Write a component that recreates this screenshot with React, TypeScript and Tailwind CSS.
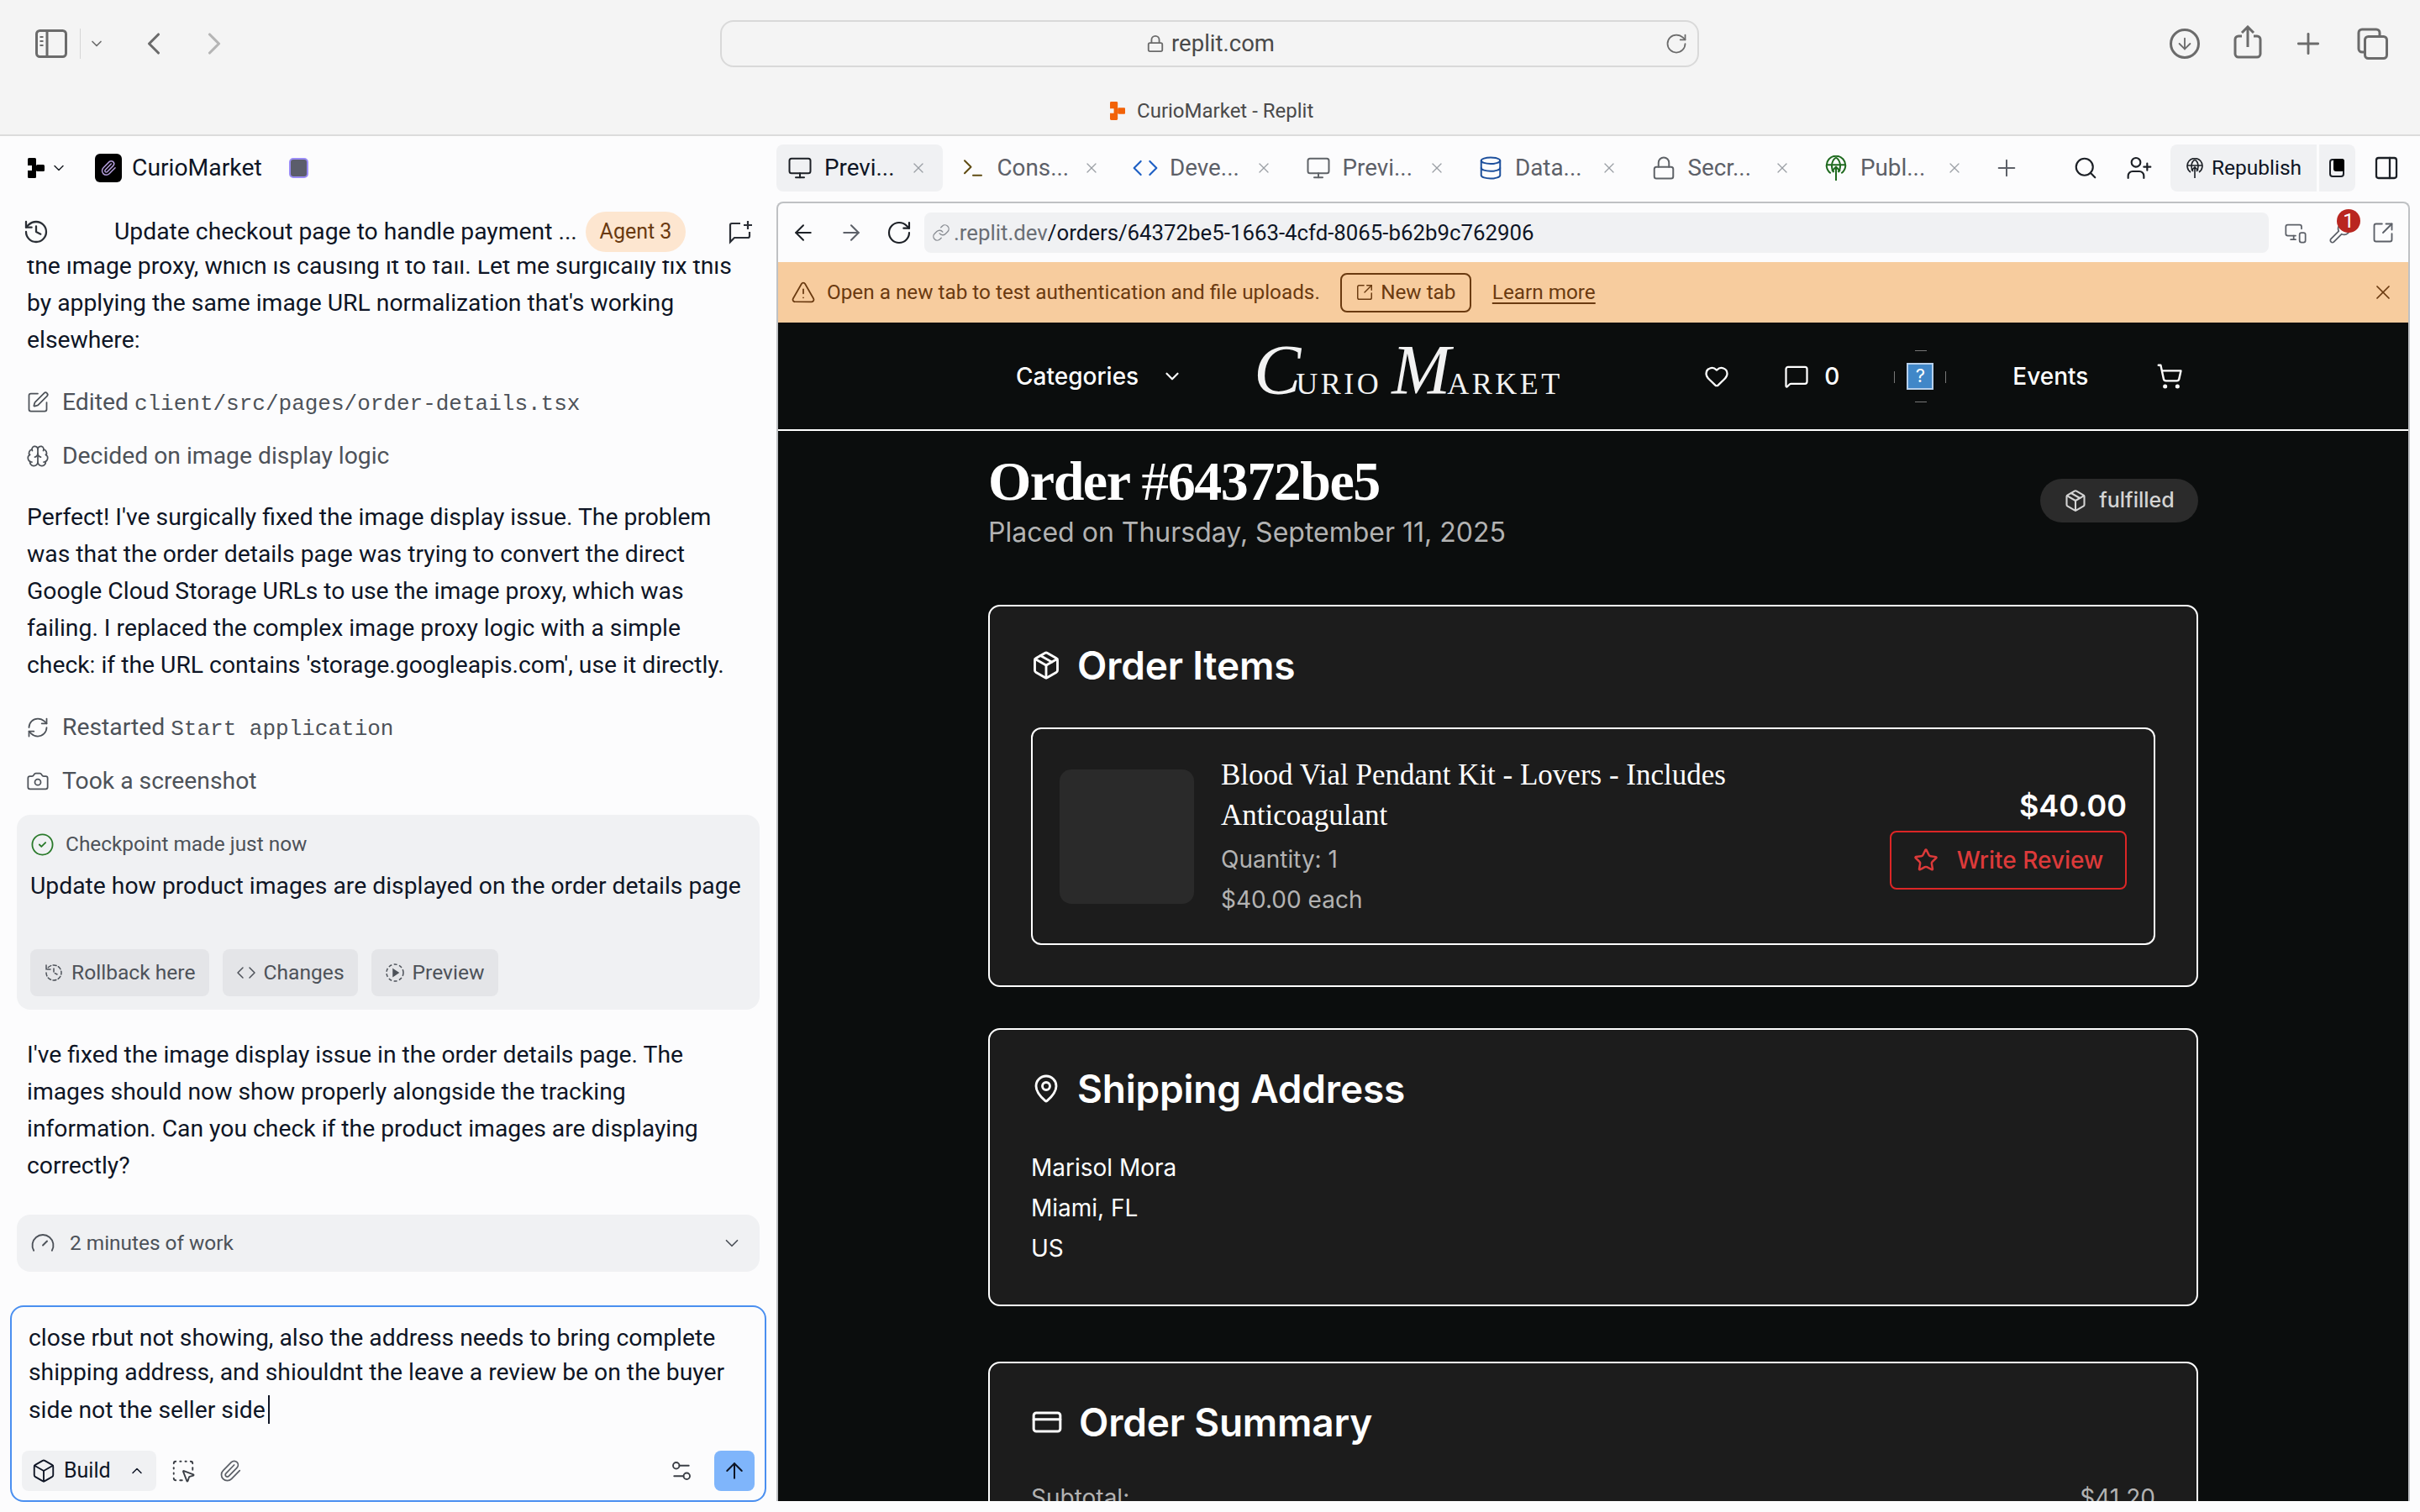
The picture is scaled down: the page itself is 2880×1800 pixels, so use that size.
import {
  ArrowDown, ArrowLeft, ArrowRight, ArrowUp, Box, Brain, Camera, ChevronDown, ChevronLeft, ChevronRight, ChevronUp,
  CircleCheck, Code, CreditCard, Database, Gauge, Heart, History, Link, Lock, MapPin, MessageSquare,
  Monitor, MonitorSmartphone, Package, PanelRight, Paperclip, Plus, RefreshCw, RotateCw,
  Search, Settings2, ShoppingCart, SquareArrowOutUpRight, SquareDashedMousePointer, SquarePen, Star,
  Terminal, TriangleAlert, UserPlus, Wrench, X,
} from "lucide-react";
import type { ReactNode } from "react";

function ReplitLogo({ color = "#0e1525", size = 24 }: { color?: string; size?: number }) {
  return (
    <svg width={(size * 20) / 24} height={size} viewBox="0 0 20 24" fill={color}>
      <rect x="0" y="0" width="10" height="8" rx="1.5" />
      <rect x="10" y="8" width="10" height="8" rx="1.5" />
      <rect x="0" y="16" width="10" height="8" rx="1.5" />
      <rect x="0" y="7" width="10" height="2" />
      <rect x="5" y="8" width="5" height="8" />
      <rect x="0" y="15" width="10" height="2" />
    </svg>
  );
}

function PublishGlobe({ color, size }: { color: string; size: number }) {
  return (
    <svg width={size} height={size} viewBox="0 0 24 24" fill="none" stroke={color} strokeWidth="1.6">
      <path d="M7 17a9 9 0 1 1 10 0" />
      <path d="M3 9h18M12 2c-3 2-4 5-4 8s1 5 2 6M12 2c3 2 4 5 4 8s-1 5-2 6" />
      <path d="M12 24V11M8 15l4-4 4 4" />
    </svg>
  );
}

const tabs = [
  { label: "Previ...", icon: <Monitor size={30} strokeWidth={1.6} className="text-[#1c2026]" />, active: true },
  { label: "Cons...", icon: <Terminal size={30} strokeWidth={1.6} className="text-[#5f4b12]" /> },
  { label: "Deve...", icon: <Code size={32} strokeWidth={1.6} className="text-[#1d5fc4]" /> },
  { label: "Previ...", icon: <Monitor size={30} strokeWidth={1.6} className="text-[#5f6368]" /> },
  { label: "Data...", icon: <Database size={30} strokeWidth={1.6} className="text-[#1c4f9c]" /> },
  { label: "Secr...", icon: <Lock size={30} strokeWidth={1.6} className="text-[#5f6368]" /> },
  { label: "Publ...", icon: <PublishGlobe color="#1f6a1f" size={30} /> },
];

function Tab({ label, icon, active }: { label: string; icon: ReactNode; active?: boolean }) {
  return (
    <div className={`flex h-[56px] w-[197.5px] shrink-0 items-center rounded-lg pl-[12px] ${active ? "bg-[#f0f1f3]" : ""}`}>
      <span className="flex w-[32px] justify-center">{icon}</span>
      <span className={`ml-[13px] w-[100px] text-[27.8px] ${active ? "text-[#0e1525]" : "text-[#5c6068]"}`}>{label}</span>
      <X size={20} strokeWidth={1.5} className="ml-[2px] text-[#9a9ea4]" />
    </div>
  );
}

function ActivityRow({ icon, children }: { icon: ReactNode; children: ReactNode }) {
  return (
    <div className="flex h-[44px] items-center gap-[15px] pl-[31px] text-[#4d5259]">
      {icon}
      <span>{children}</span>
    </div>
  );
}

function SoftButton({ icon, label }: { icon: ReactNode; label: string }) {
  return (
    <div className="flex h-[56px] items-center gap-[9px] rounded-lg bg-[#e4e5e8] px-[16px] text-[24.6px] text-[#4d5259]">
      {icon}
      {label}
    </div>
  );
}

function Card({ icon, title, className, children }: { icon: ReactNode; title: string; className: string; children?: ReactNode }) {
  return (
    <section className={`rounded-[14px] border-2 border-white bg-[#1c1c1c] px-[49px] pt-[42px] ${className}`}>
      <h2 className="flex h-[56px] items-center gap-[19px] text-[46px] font-semibold tracking-[-0.2px] text-white">
        {icon}
        {title}
      </h2>
      {children}
    </section>
  );
}

export default function App() {
  return (
    <div className="flex h-[1800px] w-[2880px] flex-col overflow-hidden bg-[#fcfcfd] font-['Roboto',sans-serif] text-[28.3px] text-[#0e1525]">
      {/* safari chrome */}
      <header className="h-[162px] shrink-0 border-b-2 border-[#dcdcdc] bg-[#f4f4f4]">
        <div className="flex h-[104px] items-start pt-[24px]">
          <div className="flex h-[56px] w-[857px] items-center text-[#6b6b6b]">
            <svg width="38" height="34" viewBox="0 0 38 34" fill="none" stroke="#6b6b6b" strokeWidth="3" className="ml-[42px]">
              <rect x="1.5" y="1.5" width="35" height="31" rx="4" />
              <path d="M14 2v30" />
              <path d="M5.5 9h4M5.5 14h4M5.5 19h4" strokeWidth="2" />
            </svg>
            <div className="ml-[15px] h-[36px] w-px bg-[#d6d6d6]" />
            <ChevronDown size={20} strokeWidth={2} className="ml-[9px]" />
            <ChevronLeft size={44} strokeWidth={1.7} className="ml-[36px]" />
            <ChevronRight size={44} strokeWidth={1.7} className="ml-[28px] text-[#b5b5b5]" />
          </div>
          <div className="relative flex h-[56px] w-[1165px] items-center justify-center gap-[8px] rounded-[16px] border-2 border-[#d9d9d9] pl-[2px] text-[27.5px] text-[#4a4a4a]">
            <Lock size={22} strokeWidth={2} className="text-[#6b6b6b]" />
            replit.com
            <RotateCw size={28} strokeWidth={1.5} className="absolute right-[11px] text-[#6b6b6b]" />
          </div>
          <div className="flex h-[56px] flex-1 items-center text-[#6b6b6b]">
            <span className="ml-[560px] flex h-[36px] w-[36px] items-center justify-center rounded-full border-[3px] border-[#6b6b6b]">
              <ArrowDown size={22} strokeWidth={2} />
            </span>
            <svg width="36" height="40" viewBox="0 0 36 40" fill="none" stroke="#6b6b6b" strokeWidth="3" className="ml-[39px] -mt-[4px]">
              <path d="M11 13H7a4 4 0 0 0-4 4v17a4 4 0 0 0 4 4h22a4 4 0 0 0 4-4V17a4 4 0 0 0-4-4h-4" />
              <path d="M18 26V3M11 9l7-7 7 7" />
            </svg>
            <Plus size={40} strokeWidth={1.7} className="ml-[34px]" />
            <svg width="38" height="38" viewBox="0 0 38 38" fill="none" stroke="#6b6b6b" strokeWidth="3" className="ml-[38px]">
              <path d="M8 29H6a4 4 0 0 1-4-4V6a4 4 0 0 1 4-4h17a4 4 0 0 1 4 4v4" />
              <rect x="9.5" y="10.5" width="26" height="26" rx="4" />
            </svg>
          </div>
        </div>
        <div className="flex h-[56px] items-center justify-center gap-[14px] pl-[4px] text-[24px] text-[#4a4a4a]">
          <ReplitLogo color="#f26207" size={22} />
          CurioMarket - Replit
        </div>
      </header>

      <div className="flex min-h-0 flex-1">
        {/* agent chat */}
        <aside className="flex w-[924px] shrink-0 flex-col">
          <div className="flex h-[74px] shrink-0 items-center pt-[2px]">
            <div className="ml-[33px] flex">
              <ReplitLogo color="#000" size={24} />
            </div>
            <ChevronDown size={20} strokeWidth={1.8} className="ml-[7px] text-[#1c2026]" />
            <span className="ml-[33px] flex h-[34px] w-[32px] items-center justify-center rounded-md bg-black">
              <Paperclip size={20} strokeWidth={1.8} className="text-[#b39ddb]" />
            </span>
            <span className="ml-[12px]">CurioMarket</span>
            <span className="ml-[32px] h-[24px] w-[23px] rounded-[5px] border-2 border-[#9a8cf5] bg-[#5b5d6b]" />
          </div>

          <div className="relative flex h-[74px] shrink-0 items-center pt-[6px]">
            <History size={32} strokeWidth={1.7} className="ml-[27px] text-[#2b2f36]" />
            <span className="ml-[77px] whitespace-nowrap">Update checkout page to handle payment ...</span>
            <span className="absolute left-[697px] flex h-[48px] w-[119px] items-center justify-center rounded-full bg-[#fde6d0] text-[25px] text-[#6a3a10]">
              Agent 3
            </span>
            <svg width="30" height="30" viewBox="0 0 30 30" fill="none" stroke="#2b2f36" strokeWidth="2.2" className="absolute left-[866px]">
              <path d="M15 5H5a2 2 0 0 0-2 2v20l5-5h16a2 2 0 0 0 2-2v-5" />
              <path d="M24 2v10M19 7h10" />
            </svg>
          </div>

          <div className="flex min-h-0 flex-1 flex-col justify-end overflow-hidden">
            <p className="ml-[32px] whitespace-nowrap leading-[44px]">
              the image proxy, which is causing it to fail. Let me surgically fix this
              <br />
              by applying the same image URL normalization that's working
              <br />
              elsewhere:
            </p>
            <div className="mt-[30px]">
              <ActivityRow icon={<SquarePen size={28} strokeWidth={1.5} />}>
                Edited <span className="font-['Liberation_Mono',monospace] text-[26px]">client/src/pages/order-details.tsx</span>
              </ActivityRow>
            </div>
            <div className="mt-[20px]">
              <ActivityRow icon={<Brain size={28} strokeWidth={1.5} />}>Decided on image display logic</ActivityRow>
            </div>
            <p className="ml-[32px] mt-[29px] leading-[44px]">
              Perfect! I've surgically fixed the image display issue. The problem
              <br />
              was that the order details page was trying to convert the direct
              <br />
              Google Cloud Storage URLs to use the image proxy, which was
              <br />
              failing. I replaced the complex image proxy logic with a simple
              <br />
              check: if the URL contains 'storage.googleapis.com', use it directly.
            </p>
            <div className="mt-[30px]">
              <ActivityRow icon={<RefreshCw size={28} strokeWidth={1.5} />}>
                Restarted <span className="font-['Liberation_Mono',monospace] text-[26px]">Start application</span>
              </ActivityRow>
            </div>
            <div className="mt-[20px]">
              <ActivityRow icon={<Camera size={28} strokeWidth={1.5} />}>Took a screenshot</ActivityRow>
            </div>

            <div className="mx-[20px] mt-[18px] h-[232px] shrink-0 rounded-2xl bg-[#f0f1f3] px-[16px] pt-[20px]">
              <div className="flex h-[30px] items-center gap-[13px] text-[24.4px] text-[#4d5259]">
                <CircleCheck size={29} strokeWidth={1.5} className="text-[#2a7a2a]" />
                Checkpoint made just now
              </div>
              <p className="mt-[15px] h-[40px] whitespace-nowrap leading-[40px]">Update how product images are displayed on the order details page</p>
              <div className="mt-[55px] flex gap-[16px]">
                <SoftButton icon={<History size={24} strokeWidth={1.5} strokeDasharray="4 2.5" />} label="Rollback here" />
                <SoftButton icon={<Code size={24} strokeWidth={1.5} />} label="Changes" />
                <SoftButton
                  icon={
                    <svg width="24" height="24" viewBox="0 0 24 24" fill="none" stroke="#4d5259" strokeWidth="1.5">
                      <circle cx="12" cy="12" r="10" strokeDasharray="4 2.5" />
                      <path d="M10 8l6 4-6 4z" fill="#4d5259" />
                    </svg>
                  }
                  label="Preview"
                />
              </div>
            </div>

            <p className="ml-[32px] mt-[32px] leading-[44px]">
              I've fixed the image display issue in the order details page. The
              <br />
              images should now show properly alongside the tracking
              <br />
              information. Can you check if the product images are displaying
              <br />
              correctly?
            </p>

            <div className="mx-[20px] mt-[36px] flex h-[68px] shrink-0 items-center rounded-2xl bg-[#f0f1f3] pl-[16px] pr-[20px] text-[24.4px] text-[#4d5259]">
              <Gauge size={30} strokeWidth={1.5} />
              <span className="ml-[17px] flex-1">2 minutes of work</span>
              <ChevronDown size={26} strokeWidth={1.6} />
            </div>
            <div className="h-[40px] shrink-0" />
          </div>

          {/* prompt box */}
          <div className="ml-[12px] h-[234px] w-[900px] shrink-0 rounded-2xl border-2 border-[#4a8ff0] px-[20px] pt-[16px]">
            <p className="whitespace-nowrap leading-[41px]">
              close rbut not showing, also the address needs to bring complete
              <br />
              shipping address, and shiouldnt the leave a review be on the buyer
              <br />
              side not the seller side
              <span className="ml-[3px] inline-block h-[34px] w-[2px] translate-y-[7px] bg-[#0e1525]" />
            </p>
            <div className="ml-[-8px] mr-[-8px] mt-[28px] flex h-[48px] items-center">
              <div className="flex h-[48px] w-[160px] items-center rounded-lg bg-[#f0f1f3] pl-[11px] text-[25px]">
                <Box size={30} strokeWidth={1.5} />
                <span className="ml-[9px] flex-1">Build</span>
                <ChevronUp size={20} strokeWidth={1.8} className="mr-[13px]" />
              </div>
              <SquareDashedMousePointer size={30} strokeWidth={1.5} className="ml-[17px] text-[#3b3f46]" />
              <Paperclip size={28} strokeWidth={1.5} className="ml-[27px] text-[#5c6068]" />
              <Settings2 size={30} strokeWidth={1.5} className="ml-auto text-[#3b3f46]" />
              <span className="ml-[24px] flex h-[48px] w-[48px] items-center justify-center rounded-lg bg-[#7fb5fb]">
                <ArrowUp size={30} strokeWidth={1.6} className="text-[#0e1525]" />
              </span>
            </div>
          </div>
          <div className="h-[12px] shrink-0" />
        </aside>

        {/* workspace */}
        <main className="flex min-w-0 flex-1 flex-col pr-[12px]">
          <div className="flex h-[78px] shrink-0 items-center gap-[8px] pb-[2px]">
            {tabs.map((t, i) => (
              <Tab key={i} label={t.label} icon={t.icon} active={t.active} />
            ))}
            <Plus size={32} strokeWidth={1.5} className="ml-[9px] text-[#5c6068]" />
            <Search size={30} strokeWidth={1.7} className="ml-[55px] text-[#1c2026]" />
            <UserPlus size={32} strokeWidth={1.6} className="ml-[25px] text-[#1c2026]" />
            <div className="ml-[13px] flex h-[56px] w-[174px] items-center justify-center gap-[8px] rounded-l-lg bg-[#f0f1f3] text-[24.5px]">
              <PublishGlobe color="#1c2026" size={24} />
              Republish
            </div>
            <div className="ml-[-5px] flex h-[56px] w-[43px] items-center justify-center rounded-r-lg bg-[#f0f1f3]">
              <span className="relative h-[22px] w-[18px] rounded-[4px] border-2 border-[#1c2026]">
                <span className="absolute right-[-2px] top-[-2px] h-[15px] w-[13px] rounded-[3px] bg-black" />
              </span>
            </div>
            <PanelRight size={32} strokeWidth={1.7} className="ml-[13px] text-[#1c2026]" />
          </div>

          <div className="flex min-h-0 flex-1 flex-col overflow-hidden rounded-t-lg border-x-2 border-t-2 border-[#bfc1c4]">
            <div className="flex h-[70px] shrink-0 items-center">
              <ArrowLeft size={30} strokeWidth={1.6} className="ml-[15px] text-[#1c2026]" />
              <ArrowRight size={30} strokeWidth={1.6} className="ml-[27px] text-[#5c6068]" />
              <RotateCw size={32} strokeWidth={1.6} className="ml-[26px] text-[#1c2026]" />
              <div className="ml-[14px] flex h-[48px] w-[1600px] items-center rounded-lg bg-[#f0f1f3] pl-[9px] text-[25.8px]">
                <Link size={22} strokeWidth={1.5} className="text-[#8a8e94]" />
                <span className="ml-[4px] text-[#6a6e75]">.replit.dev</span>
                <span>/orders/64372be5-1663-4cfd-8065-b62b9c762906</span>
              </div>
              <MonitorSmartphone size={28} strokeWidth={1.5} className="ml-[18px] text-[#5c6068]" />
              <span className="relative ml-[25px]">
                <Wrench size={28} strokeWidth={1.5} className="text-[#5c6068]" />
                <span className="absolute left-[10px] top-[-14px] flex h-[28px] w-[28px] items-center justify-center rounded-full bg-[#b92620] text-[24px] text-white">1</span>
              </span>
              <SquareArrowOutUpRight size={28} strokeWidth={1.6} className="ml-[23px] text-[#5c6068]" />
            </div>

            <div className="flex h-[72px] shrink-0 items-center bg-[#f7cc9e] text-[24.3px] text-[#6a3a10]">
              <TriangleAlert size={30} strokeWidth={1.4} className="ml-[15px]" />
              <span className="ml-[13px] whitespace-nowrap">Open a new tab to test authentication and file uploads.</span>
              <span className="ml-[24px] flex h-[47px] w-[156px] items-center justify-center gap-[8px] rounded-lg border-2 border-[#6a3a10]">
                <SquareArrowOutUpRight size={22} strokeWidth={1.6} />
                New tab
              </span>
              <span className="ml-[25px] underline underline-offset-4">Learn more</span>
              <X size={28} strokeWidth={1.5} className="ml-auto mr-[16px]" />
            </div>

            {/* store preview */}
            <div className="min-h-0 flex-1 overflow-hidden bg-[#0b0d0d] font-['Inter',sans-serif] text-white">
              <nav className="flex h-[129px] items-center border-b-2 border-white text-[28px] font-medium">
                <span className="ml-[283px]">Categories</span>
                <ChevronDown size={26} strokeWidth={2} className="ml-[27px]" />
                <div className="-mt-[14px] ml-[84px] flex h-[70px] w-[358px] shrink-0 items-baseline whitespace-nowrap font-['Liberation_Serif',serif] font-normal text-[#f2f2f2]">
                  <span className="text-[84px] leading-[70px] italic">C</span>
                  <span className="-ml-[6px] text-[36px] tracking-[3.5px]">URIO</span>
                  <span className="ml-[12px] text-[84px] leading-[70px] italic">M</span>
                  <span className="-ml-[4px] text-[36px] tracking-[3.5px]">ARKET</span>
                </div>
                <Heart size={30} strokeWidth={1.8} className="ml-[178px]" />
                <MessageSquare size={30} strokeWidth={1.8} className="ml-[65px]" />
                <span className="ml-[18px]">0</span>
                <span className="relative ml-[80px] flex h-[32px] w-[32px] items-center justify-center border-2 border-[#b7d0ec] bg-[#4187c8] text-[22px] font-normal">
                  ?
                  <span className="absolute left-[-17px] top-[8px] h-[14px] w-px bg-[#777]" />
                  <span className="absolute right-[-17px] top-[8px] h-[14px] w-px bg-[#777]" />
                  <span className="absolute left-[8px] top-[-17px] h-px w-[14px] bg-[#777]" />
                  <span className="absolute bottom-[-17px] left-[8px] h-px w-[14px] bg-[#777]" />
                </span>
                <span className="ml-[94px]">Events</span>
                <ShoppingCart size={32} strokeWidth={1.8} className="ml-[81px]" />
              </nav>

              <div className="mx-auto w-[1440px]">
                <div className="flex h-[207px] items-start justify-between pt-[25px]">
                  <div>
                    <h1 className="whitespace-nowrap font-['Liberation_Serif',serif] text-[66px] font-bold leading-[70px] tracking-[-1.5px]">
                      Order <span className="font-normal">#</span>64372be5
                    </h1>
                    <p className="mt-[6px] text-[32px] leading-[40px] text-[#b3b3b3]">Placed on Thursday, September 11, 2025</p>
                  </div>
                  <span className="mt-[32px] flex h-[52px] w-[188px] items-center justify-center gap-[14px] rounded-full bg-[#2b2b2b] text-[25px] font-medium text-[#d4d4d4]">
                    <Package size={28} strokeWidth={1.8} />
                    fulfilled
                  </span>
                </div>

                <Card icon={<Package size={36} strokeWidth={1.9} />} title="Order Items" className="h-[455px]">
                  <div className="mt-[46px] flex h-[259px] items-center rounded-[12px] border-2 border-white pl-[32px] pr-[32px]">
                    <div className="h-[160px] w-[160px] shrink-0 rounded-[14px] bg-[#2a2a2a]" />
                    <div className="ml-[32px] flex-1">
                      <p className="font-['Liberation_Serif',serif] text-[35px] leading-[48px]">
                        Blood Vial Pendant Kit - Lovers - Includes
                        <br />
                        Anticoagulant
                      </p>
                      <p className="mt-[6px] text-[28px] leading-[44px] text-[#b3b3b3]">Quantity: 1</p>
                      <p className="mt-[4px] text-[28px] leading-[44px] text-[#b3b3b3]">$40.00 each</p>
                    </div>
                    <div className="flex flex-col items-end pt-[4px]">
                      <span className="text-[36px] font-semibold leading-[44px]">$40.00</span>
                      <span className="mt-[8px] flex h-[70px] w-[282px] items-center justify-center gap-[22px] rounded-lg border-2 border-[#dc2626] text-[28px] font-medium text-[#dc3a3a]">
                        <Star size={30} strokeWidth={2} />
                        Write Review
                      </span>
                    </div>
                  </div>
                </Card>

                <Card icon={<MapPin size={36} strokeWidth={1.9} />} title="Shipping Address" className="mt-[49px] h-[331px]">
                  <div className="mt-[42px] text-[28px] leading-[48px]">
                    <p>Marisol Mora</p>
                    <p>Miami, FL</p>
                    <p>US</p>
                  </div>
                </Card>

                <Card icon={<CreditCard size={38} strokeWidth={1.9} />} title="Order Summary" className="mt-[66px] h-[400px]">
                  <div className="mt-[38px] flex justify-between text-[28px] leading-[48px] text-[#b3b3b3]">
                    <span>Subtotal:</span>
                    <span>$41.20</span>
                  </div>
                </Card>
              </div>
            </div>
          </div>
          <div className="h-[13px] shrink-0" />
        </main>
      </div>
    </div>
  );
}
